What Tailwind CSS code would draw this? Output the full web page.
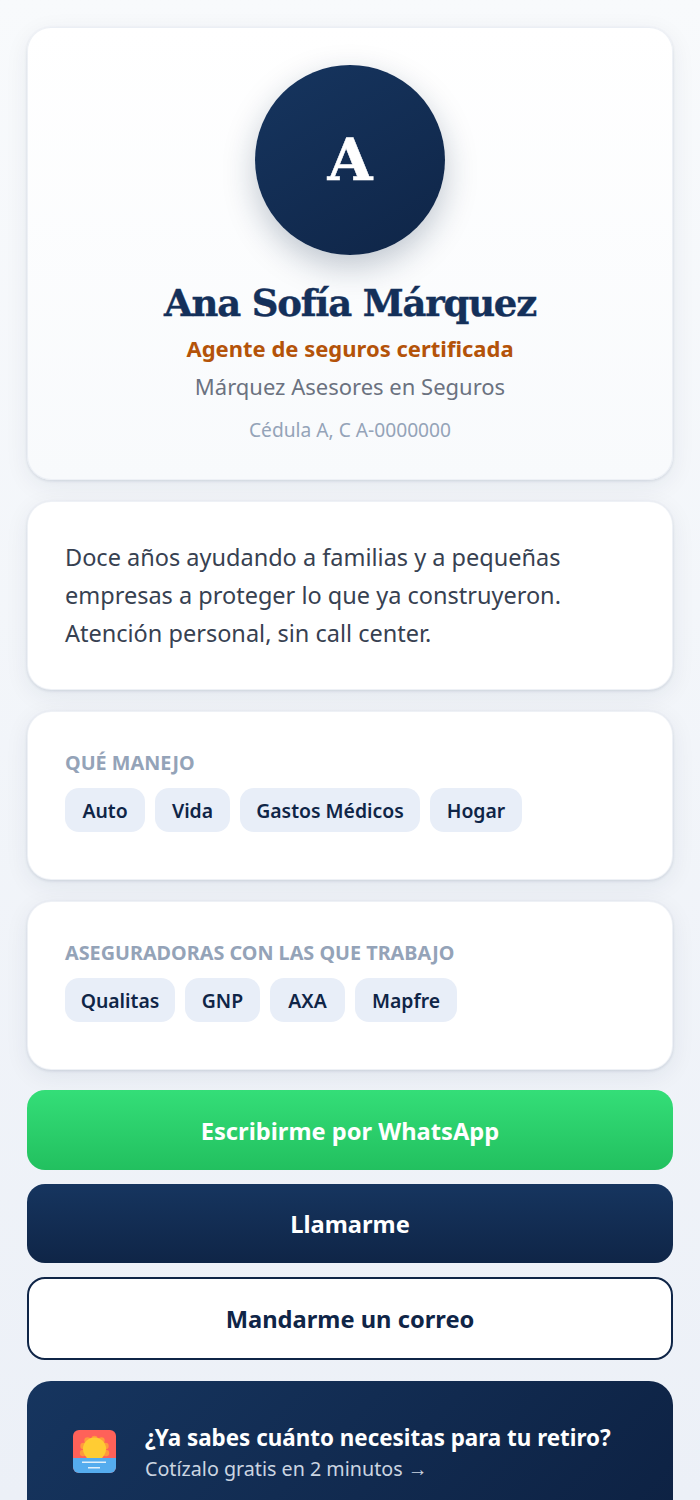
<!DOCTYPE html>
<html lang="es">
<head>
    <meta charset="UTF-8">
    <meta name="viewport" content="width=device-width, initial-scale=1.0">
    <title>Ana Sofía Márquez</title>
    <script src="https://cdn.jsdelivr.net/npm/@tailwindcss/browser@4"></script>
</head>
<body class="h-[1500px] overflow-hidden bg-gradient-to-b from-[#f8fafc] to-[#ecf0f7] font-['Noto_Sans',sans-serif]">
    <div class="flex flex-col px-[27px] pt-[27px]">
        <!-- Header -->
        <div class="h-[453px] flex flex-col items-center pt-[37px] rounded-[24px] border border-[#e2e8f0]/60 bg-gradient-to-b from-white to-[#f8fafc] shadow-[0_1px_3px_rgba(15,39,71,0.12),0_6px_24px_rgba(15,39,71,0.07)]">
            <div class="w-[190px] h-[190px] shrink-0 rounded-full flex items-center justify-center bg-[linear-gradient(150deg,#16355f,#0f2547)] shadow-[0_12px_32px_rgba(15,39,71,0.25)]">
                <span class="text-white text-[58px] font-bold leading-none font-['DejaVu_Serif',serif] [-webkit-text-stroke:0.5px_white]">A</span>
            </div>
            <h1 class="mt-[24px] text-[37px] leading-[48px] tracking-[-1.2px] font-bold text-[#14305a] font-['DejaVu_Serif',serif] [-webkit-text-stroke:0.4px_#14305a]">Ana Sofía Márquez</h1>
            <p class="mt-[6px] text-[22px] leading-[30px] font-bold text-[#b45309]">Agente de seguros certificada</p>
            <p class="mt-[6px] text-[22px] leading-[34px] text-[#6b7280]">Márquez Asesores en Seguros</p>
            <p class="mt-[13px] text-[19.2px] leading-[28px] text-[#94a3b8]">Cédula A, C A-0000000</p>
        </div>

        <!-- Bio -->
        <div class="mt-[21px] h-[189px] px-[37px] pt-[36px] rounded-[24px] border border-[#e2e8f0]/60 bg-white shadow-[0_1px_3px_rgba(15,39,71,0.12),0_6px_24px_rgba(15,39,71,0.07)]">
            <p class="text-[23.5px] leading-[38px] text-[#374151]">Doce años ayudando a familias y a pequeñas empresas a proteger lo que ya construyeron. Atención personal, sin call center.</p>
        </div>

        <!-- Que manejo -->
        <div class="mt-[21px] h-[169px] px-[37px] pt-[38px] rounded-[24px] border border-[#e2e8f0]/60 bg-white shadow-[0_1px_3px_rgba(15,39,71,0.12),0_6px_24px_rgba(15,39,71,0.07)]">
            <h2 class="text-[19.8px] leading-[26px] font-bold text-[#94a3b8]">QUÉ MANEJO</h2>
            <div class="mt-[12px] flex gap-[10px]">
                <span class="w-[80px] h-[44px] pt-[1px] flex items-center justify-center rounded-[14px] bg-[#e8eef8] text-[19.4px] font-semibold text-[#0f2547]">Auto</span>
                <span class="w-[75px] h-[44px] pt-[1px] flex items-center justify-center rounded-[14px] bg-[#e8eef8] text-[19.4px] font-semibold text-[#0f2547]">Vida</span>
                <span class="w-[180px] h-[44px] pt-[1px] flex items-center justify-center rounded-[14px] bg-[#e8eef8] text-[19.4px] font-semibold text-[#0f2547]">Gastos Médicos</span>
                <span class="w-[92px] h-[44px] pt-[1px] flex items-center justify-center rounded-[14px] bg-[#e8eef8] text-[19.4px] font-semibold text-[#0f2547]">Hogar</span>
            </div>
        </div>

        <!-- Aseguradoras -->
        <div class="mt-[21px] h-[169px] px-[37px] pt-[38px] rounded-[24px] border border-[#e2e8f0]/60 bg-white shadow-[0_1px_3px_rgba(15,39,71,0.12),0_6px_24px_rgba(15,39,71,0.07)]">
            <h2 class="text-[19.8px] leading-[26px] font-bold text-[#94a3b8]">ASEGURADORAS CON LAS QUE TRABAJO</h2>
            <div class="mt-[12px] flex gap-[10px]">
                <span class="w-[110px] h-[44px] pt-[1px] flex items-center justify-center rounded-[14px] bg-[#e8eef8] text-[19.4px] font-semibold text-[#0f2547]">Qualitas</span>
                <span class="w-[75px] h-[44px] pt-[1px] flex items-center justify-center rounded-[14px] bg-[#e8eef8] text-[19.4px] font-semibold text-[#0f2547]">GNP</span>
                <span class="w-[75px] h-[44px] pt-[1px] flex items-center justify-center rounded-[14px] bg-[#e8eef8] text-[19.4px] font-semibold text-[#0f2547]">AXA</span>
                <span class="w-[102px] h-[44px] pt-[1px] flex items-center justify-center rounded-[14px] bg-[#e8eef8] text-[19.4px] font-semibold text-[#0f2547]">Mapfre</span>
            </div>
        </div>

        <!-- Buttons -->
        <div class="mt-[20px] h-[80px] pt-[3px] flex items-center justify-center rounded-[18px] bg-gradient-to-b from-[#34de78] to-[#22c05f] text-white text-[23.7px] font-bold">Escribirme por WhatsApp</div>
        <div class="mt-[14px] h-[79px] pt-[2px] flex items-center justify-center rounded-[18px] bg-gradient-to-b from-[#16355f] to-[#0f2547] text-white text-[23.7px] font-bold">Llamarme</div>
        <div class="mt-[14px] h-[83px] pt-[2px] flex items-center justify-center rounded-[18px] border-2 border-[#0f2547] bg-white text-[#0f2547] text-[23.7px] font-bold">Mandarme un correo</div>

        <!-- Banner -->
        <div class="mt-[21px] h-[160px] flex items-start gap-[29px] px-[46px] pt-[39px] rounded-[24px] bg-[linear-gradient(135deg,#16355f,#0d2142)]">
            <svg class="mt-[10px] shrink-0" width="43" height="43" viewBox="0 0 43 43">
                <rect width="43" height="43" rx="6" fill="#ff6159"/>
                <g fill="#ff9a3c">
                    <circle cx="21.5" cy="9" r="3.2"/>
                    <circle cx="14.5" cy="10.5" r="3.2"/>
                    <circle cx="28.5" cy="10.5" r="3.2"/>
                    <circle cx="10.5" cy="16" r="3.2"/>
                    <circle cx="32.5" cy="16" r="3.2"/>
                    <circle cx="10" cy="23" r="3.2"/>
                    <circle cx="33" cy="23" r="3.2"/>
                </g>
                <circle cx="21.5" cy="19" r="11.5" fill="#ffcc33"/>
                <path d="M0 28H43V37a6 6 0 0 1-6 6H6a6 6 0 0 1-6-6Z" fill="#55acee"/>
                <rect x="9" y="31.5" width="24" height="1.5" fill="#e1f0fb"/>
                <rect x="15" y="37" width="12" height="1.5" fill="#e1f0fb"/>
            </svg>
            <div class="min-w-0">
                <p class="text-[22.4px] leading-[36px] font-bold text-white whitespace-nowrap">¿Ya sabes cuánto necesitas para tu retiro?</p>
                <p class="mt-[-1px] text-[19.7px] leading-[28px] text-[#cbd5e1]">Cotízalo gratis en 2 minutos →</p>
            </div>
        </div>
    </div>
</body>
</html>
